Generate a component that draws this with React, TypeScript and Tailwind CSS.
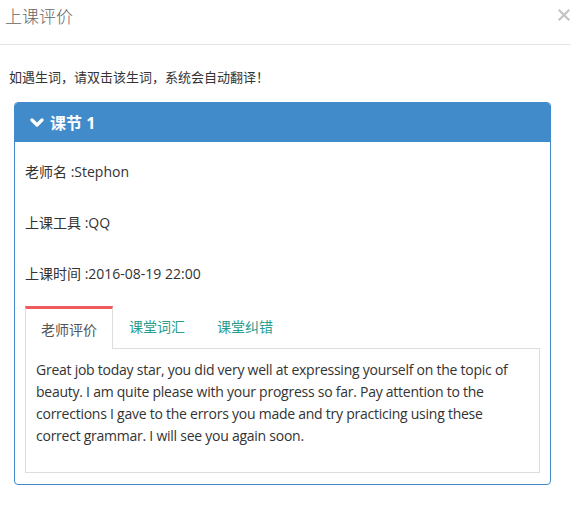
import { useState } from "react";

const tabs = ["老师评价", "课堂词汇", "课堂纠错"];

const rows = [
  ["老师名", "Stephon"],
  ["上课工具", "QQ"],
  ["上课时间", "2016-08-19 22:00"],
];

function Chevron() {
  return (
    <svg width="14" height="10" viewBox="0 0 14 10" className="mr-[6px]">
      <polyline points="2,2 7,7 12,2" fill="none" stroke="white" strokeWidth="3.2" strokeLinecap="round" strokeLinejoin="round" />
    </svg>
  );
}

function Close() {
  return (
    <svg width="12" height="12" viewBox="0 0 12 12" className="mt-[9px]">
      <path d="M1.5 1.5 L10.5 10.5 M10.5 1.5 L1.5 10.5" stroke="#c4c4c4" strokeWidth="2.2" strokeLinecap="square" />
    </svg>
  );
}

export default function App() {
  const [active, setActive] = useState(0);
  return (
    <div
      className="w-[571px] h-[505px] bg-white text-[#333] overflow-hidden"
      style={{ fontFamily: '"Open Sans", "Noto Sans CJK SC", sans-serif' }}
    >
      <div className="h-[45px] border-b border-[#e5e5e5] flex items-start justify-between pl-[5px] pr-[1px]">
        <h4 className="text-[17px] leading-[34px] text-[#666] font-light">上课评价</h4>
        <Close />
      </div>
      <div className="pt-[22px] px-[9px]">
        <p className="text-[13px] leading-[20px]">如遇生词，请双击该生词，系统会自动翻译！</p>
        <div className="mt-[15px] ml-[5px] w-[537px] h-[383px] border border-[#428bca] rounded-[4px] overflow-hidden">
          <div className="h-[39px] bg-[#428bca] flex items-center pl-[15px] text-white text-[16px] font-bold">
            <Chevron />
            <span>课节 1</span>
          </div>
          <div className="px-[10px]">
            {rows.map(([k, v], i) => (
              <div key={k} className={`text-[14px] leading-[20px] ${i === 0 ? "mt-[20px]" : "mt-[31px]"}`}>
                {k} :{v}
              </div>
            ))}
            <div className="mt-[22px] flex border-b border-[#ddd] h-[43px]">
              {tabs.map((t, i) => (
                <button
                  key={t}
                  onClick={() => setActive(i)}
                  className={
                    i === active
                      ? "w-[88px] h-[43px] -mb-px bg-white border-x border-[#ddd] border-t-[3px] border-t-[#ef5a5f] text-[14px] text-[#555]"
                      : "px-[16px] h-[40px] text-[14px] text-[#2a9d8f]"
                  }
                >
                  {t}
                </button>
              ))}
            </div>
            <div className="w-[515px] h-[124px] border-x border-b border-[#ddd] px-[10px] pt-[10px] text-[14px] leading-[22px] tracking-[-0.25px] text-[#333]">
              Great job today star, you did very well at expressing yourself on the topic of beauty. I am quite please with your
              progress so far. Pay attention to the corrections I gave to the errors you made and try practicing using these
              correct grammar. I will see you again soon.
            </div>
          </div>
        </div>
      </div>
    </div>
  );
}
